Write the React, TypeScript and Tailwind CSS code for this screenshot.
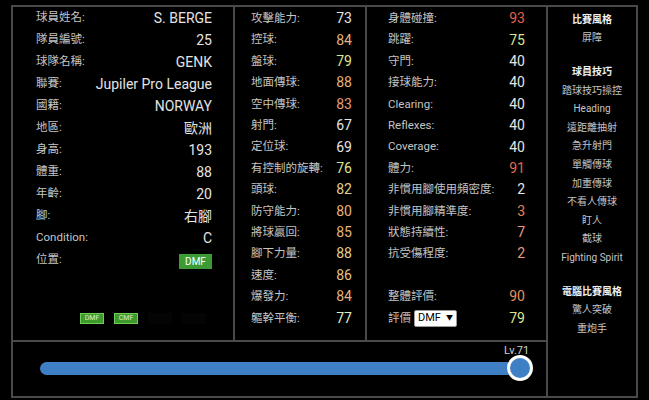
import React from 'react';

const FONT = { fontFamily: 'Roboto, "Noto Sans CJK TC", sans-serif' };

type Stat = { label: string; value: string; color?: string };

const infoRows: { label: string; value: React.ReactNode }[] = [
  { label: '球員姓名:', value: 'S. BERGE' },
  { label: '隊員編號:', value: '25' },
  { label: '球隊名稱:', value: 'GENK' },
  { label: '聯賽:', value: 'Jupiler Pro League' },
  { label: '國籍:', value: 'NORWAY' },
  { label: '地區:', value: '歐洲' },
  { label: '身高:', value: '193' },
  { label: '體重:', value: '88' },
  { label: '年齡:', value: '20' },
  { label: '腳:', value: '右腳' },
  { label: 'Condition:', value: 'C' },
  {
    label: '位置:',
    value: (
      <span className="inline-flex h-[15px] w-[33px] items-center justify-center bg-[#3d9b35] text-[10px] text-white">
        DMF
      </span>
    ),
  },
];

const attackStats: Stat[] = [
  { label: '攻擊能力:', value: '73' },
  { label: '控球:', value: '84', color: 'text-[#e6b27a]' },
  { label: '盤球:', value: '79', color: 'text-[#dbe58f]' },
  { label: '地面傳球:', value: '88', color: 'text-[#e6b27a]' },
  { label: '空中傳球:', value: '83', color: 'text-[#e89a78]' },
  { label: '射門:', value: '67' },
  { label: '定位球:', value: '69' },
  { label: '有控制的旋轉:', value: '76', color: 'text-[#dbe58f]' },
  { label: '頭球:', value: '82', color: 'text-[#e6cf8f]' },
  { label: '防守能力:', value: '80', color: 'text-[#e6b27a]' },
  { label: '將球贏回:', value: '85', color: 'text-[#e6b27a]' },
  { label: '腳下力量:', value: '88', color: 'text-[#e6cf8f]' },
  { label: '速度:', value: '86', color: 'text-[#e6c08a]' },
  { label: '爆發力:', value: '84', color: 'text-[#e6b27a]' },
  { label: '軀幹平衡:', value: '77', color: 'text-[#e3ecc4]' },
];

const physicalStats: Stat[] = [
  { label: '身體碰撞:', value: '93', color: 'text-[#e0604e]' },
  { label: '跳躍:', value: '75', color: 'text-[#dbe58f]' },
  { label: '守門:', value: '40' },
  { label: '接球能力:', value: '40' },
  { label: 'Clearing:', value: '40' },
  { label: 'Reflexes:', value: '40' },
  { label: 'Coverage:', value: '40' },
  { label: '體力:', value: '91', color: 'text-[#e06a4e]' },
  { label: '非慣用腳使用頻密度:', value: '2' },
  { label: '非慣用腳精準度:', value: '3', color: 'text-[#e68258]' },
  { label: '狀態持續性:', value: '7', color: 'text-[#e89a8a]' },
  { label: '抗受傷程度:', value: '2', color: 'text-[#e89a78]' },
];

const sideList: { text: string; heading?: boolean; gap?: boolean }[] = [
  { text: '比賽風格', heading: true },
  { text: '屏障' },
  { text: '球員技巧', heading: true, gap: true },
  { text: '踏球技巧操控' },
  { text: 'Heading' },
  { text: '遠距離抽射' },
  { text: '急升射門' },
  { text: '單觸傳球' },
  { text: '加重傳球' },
  { text: '不看人傳球' },
  { text: '盯人' },
  { text: '截球' },
  { text: 'Fighting Spirit' },
  { text: '電腦比賽風格', heading: true, gap: true },
  { text: '驚人突破' },
  { text: '重炮手' },
];

function StatRow({ s }: { s: Stat }) {
  return (
    <div className="flex h-[21.4px] items-center justify-between">
      <span className="text-[11.5px] text-[#c4c4c4]">{s.label}</span>
      <span className={`text-[14px] ${s.color ?? 'text-[#e4e4e4]'}`}>{s.value}</span>
    </div>
  );
}

export default function App() {
  return (
    <div className="h-[400px] w-[649px] overflow-hidden bg-black pl-[11px] pt-[5px]" style={FONT}>
      <div className="flex">
        {/* main area */}
        <div className="w-[535px]">
          <div className="flex h-[335px] border-l-2 border-t-2 border-[#4a4a4a]">
            {/* player info */}
            <div className="w-[222px] border-r-2 border-[#4a4a4a] pl-[23px] pr-[21px]">
              {infoRows.map((r) => (
                <div key={r.label} className="flex h-[22px] items-center justify-between">
                  <span className="text-[11.5px] text-[#c4c4c4]">{r.label}</span>
                  <span className="text-[14px] text-[#e4e4e4]">{r.value}</span>
                </div>
              ))}
              <div className="mt-[42px] flex items-center gap-[10px] pl-[44px]">
                <span className="flex h-[11px] w-[24px] items-center justify-center border border-[#6fcf50] bg-[#3f9a2e] text-[7px] leading-none text-[#d8f0d0]">
                  DMF
                </span>
                <span className="flex h-[11px] w-[24px] items-center justify-center border border-[#6fcf50] bg-[#3f9a2e] text-[7px] leading-none text-[#d8f0d0]">
                  CMF
                </span>
                <span className="h-[11px] w-[24px] bg-[#030403]" />
                <span className="h-[11px] w-[24px] bg-[#040404]" />
              </div>
            </div>

            {/* attack stats */}
            <div className="w-[132px] border-r-2 border-[#4a4a4a] pl-[16px] pr-[13px] pt-[1px]">
              {attackStats.map((s) => (
                <StatRow key={s.label} s={s} />
              ))}
            </div>

            {/* physical stats */}
            <div className="w-[179px] pl-[21px] pr-[21px] pt-[1px]">
              {physicalStats.map((s) => (
                <StatRow key={s.label} s={s} />
              ))}
              <div className="h-[21.4px]" />
              <StatRow s={{ label: '整體評價:', value: '90', color: 'text-[#e0925c]' }} />
              <div className="flex h-[21.4px] items-center justify-between">
                <span className="flex items-center gap-[3px]">
                  <span className="text-[11.5px] text-[#c4c4c4]">評價</span>
                  <span className="flex h-[17px] w-[43px] items-center justify-between rounded-[2px] border border-[#999] bg-white px-[3px] text-[11px] text-black">
                    DMF <span className="text-[7px]">▼</span>
                  </span>
                </span>
                <span className="text-[14px] text-[#dbe58f]">79</span>
              </div>
            </div>
          </div>

          {/* level slider */}
          <div className="h-[58px] border-2 border-r-0 border-[#4a4a4a] pl-[27px] pr-[13px]">
            <div className="relative h-full">
              <span className="absolute left-[464px] top-[1px] text-[11px] text-[#d0d0d0]">Lv.71</span>
              <div className="absolute left-0 top-[20px] h-[13px] w-[482px] rounded-full bg-[#3e7fc6]" />
              <div className="absolute left-[467px] top-[13px] h-[26px] w-[26px] rounded-full border-[3px] border-white bg-[#3e7fc6]" />
            </div>
          </div>
        </div>

        {/* side list */}
        <div className="h-[393px] w-[92px] border-2 border-[#4a4a4a] pt-[3px] text-center">
          {sideList.map((i) => (
            <div
              key={i.text}
              className={`flex h-[18.6px] items-center justify-center text-[10px] ${
                i.heading ? 'font-bold text-[#f0f0f0]' : 'text-[#c4c4c4]'
              } ${i.gap ? 'mt-[15px]' : ''}`}
            >
              {i.text}
            </div>
          ))}
        </div>
      </div>
    </div>
  );
}
